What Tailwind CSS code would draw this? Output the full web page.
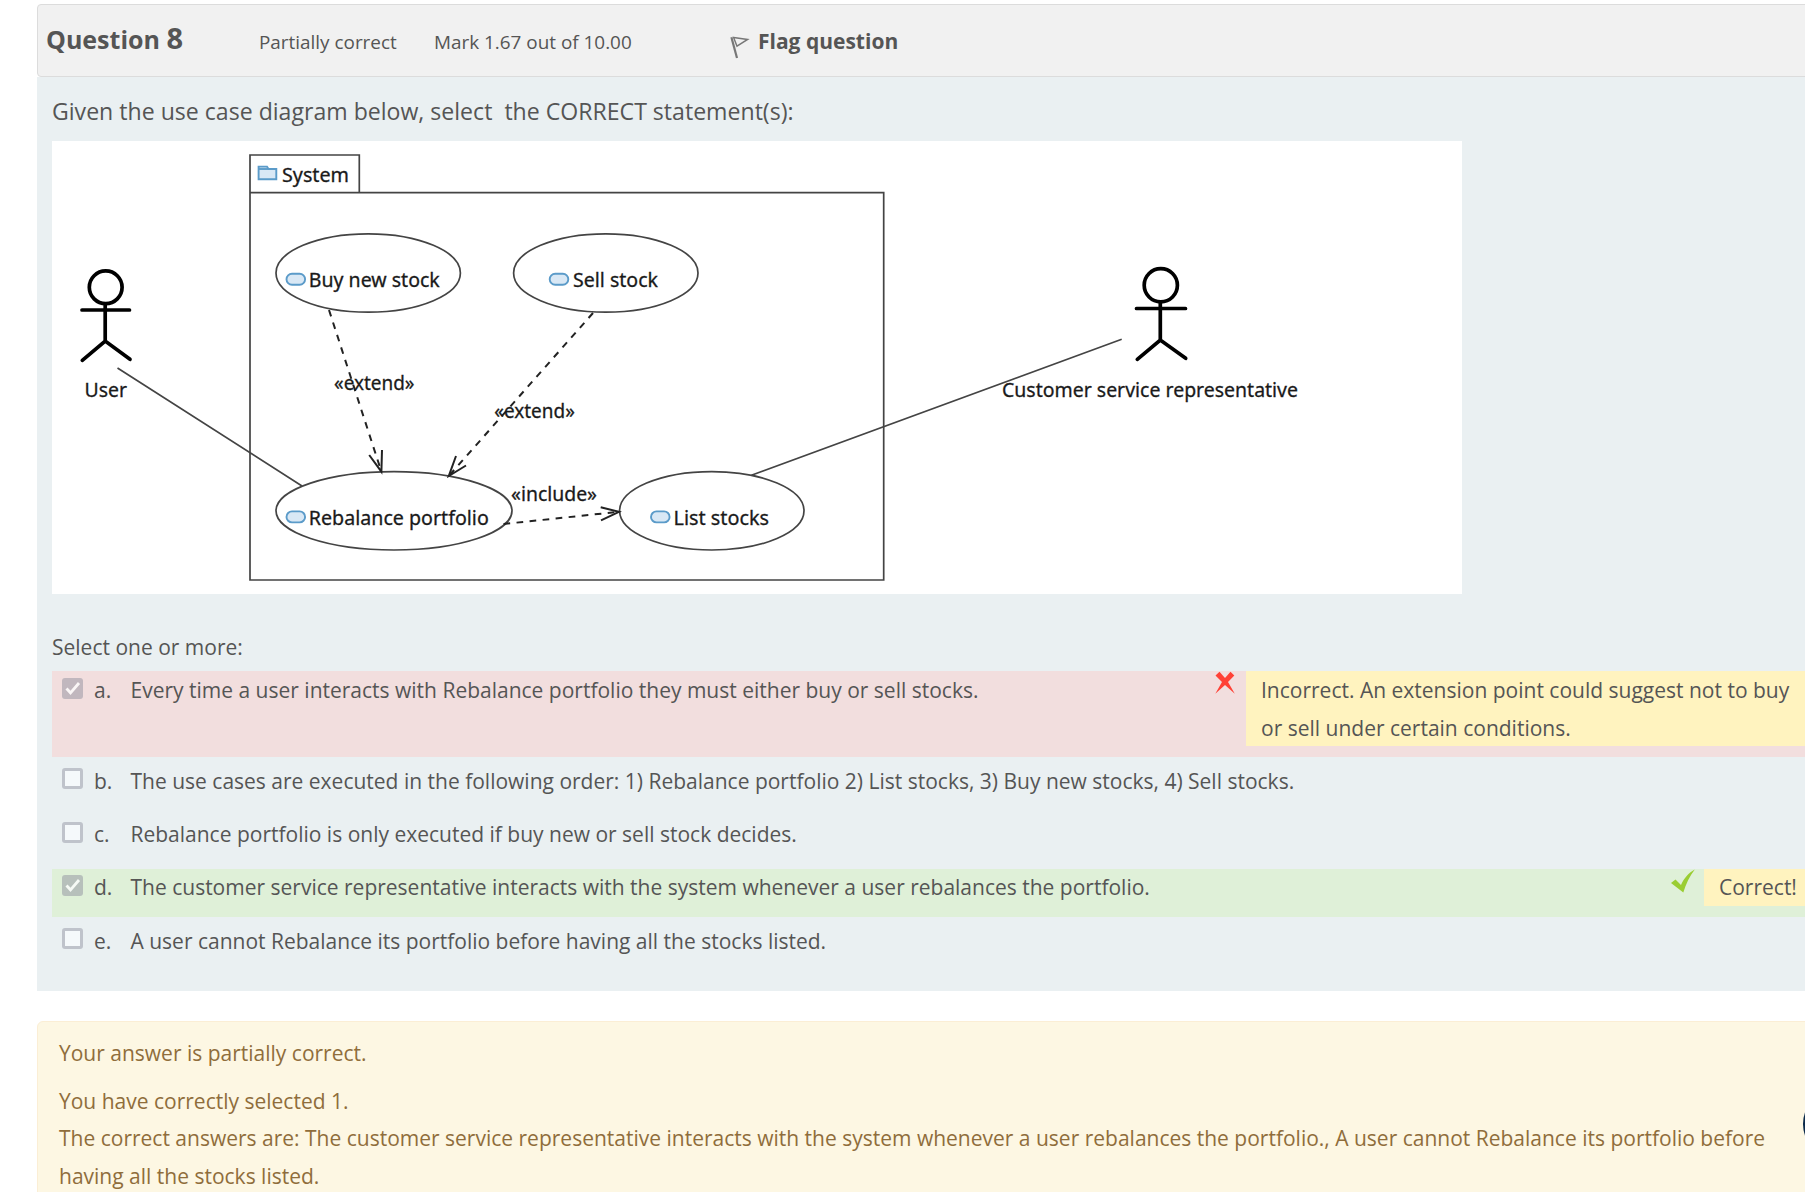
<!DOCTYPE html>
<html lang="en">
<head>
<meta charset="utf-8">
<title>Question 8</title>
<script src="https://cdn.jsdelivr.net/npm/@tailwindcss/browser@4"></script>
</head>
<body class="bg-white overflow-hidden font-['Open_Sans',sans-serif] text-[#555]">
<div class="relative w-[1805px] h-[1192px] overflow-hidden pl-[37px] pt-1">
  <main class="w-[1800px]">
    <header class="flex h-[73px] items-baseline rounded border border-[#dcdcdc] bg-[#f1f1f1] pl-2 pt-[13px] whitespace-nowrap">
      <h3 class="w-[213px] text-[25px] font-bold leading-[40px]">Question <span class="text-[29px]">8</span></h3>
      <div class="w-[175px] text-[18.9px]">Partially correct</div>
      <div class="w-[296px] text-[18.9px]">Mark 1.67 out of 10.00</div>
      <svg class="mr-[8px] w-5 h-[23px] self-start mt-[18px]" viewBox="0 0 20 23" fill="none" stroke="#777" stroke-width="1.5"><path d="M1.4 1.2L7 22" stroke-width="2.2"/><path d="M3.6 1.4L17.6 3.4L7 10.2Z"/></svg>
      <a class="text-[21px] font-bold">Flag question</a>
    </header>

    <section class="h-[914px] bg-[#eaf0f2] pl-[15px]">
      <p class="h-16 pt-[14px] text-[23.1px] leading-[40px] whitespace-pre">Given the use case diagram below, select&nbsp; the CORRECT statement(s):</p>

      <!-- Use case diagram -->
      <svg class="block h-[453px] w-[1410px] bg-white" viewBox="52 141 1410 453" fill="none" stroke="#444" stroke-width="1.7" font-family="Noto Sans, sans-serif" font-size="20">
        <path d="M250 192.7V155H359.3V192.7M250 192.7H883.7V580H250Z"/>
        <ellipse cx="368.2" cy="273" rx="92.2" ry="39.2"/>
        <ellipse cx="605.8" cy="273" rx="92.2" ry="39.2"/>
        <ellipse cx="394" cy="510.8" rx="118" ry="39.2"/>
        <ellipse cx="711.8" cy="510.8" rx="92.2" ry="39.2"/>
        <path d="M117.5 368L302 486M1121.7 339.3L751.4 475.3"/>
        <g stroke="#222" stroke-width="2">
          <path stroke-dasharray="6.7 6.4" d="M329 310L381.4 471.7M593 313L448.8 476M503.5 524L619 511.8"/>
          <path d="M369.2 455L381.4 471.7L382 450M456 456L448.8 476L466 465.5M600.7 507.3L619 511.8L601 520.3"/>
        </g>
        <g stroke="#000" stroke-width="3.7" stroke-linecap="round">
          <circle cx="105.7" cy="287.3" r="16.4"/>
          <path d="M105.2 304V341M82 310H129.5M82.3 360.3L105.2 341L130 359.3"/>
          <circle cx="1160.8" cy="285.3" r="16.6"/>
          <path d="M1160.3 302V340M1136.5 308.5H1185.5M1137.3 359.3L1160.3 340L1185.7 358.3"/>
        </g>
        <g stroke="#5b9bc9" stroke-width="1.9" fill="#d9e8f5">
          <path d="M258.6 179.2V166.6H267L268.5 169H276.3V179.2Z"/>
          <path d="M258.6 169H268"/>
          <rect x="286.5" y="273.8" width="18.6" height="11" rx="5.5"/>
          <rect x="549.7" y="273.8" width="18.6" height="11" rx="5.5"/>
          <rect x="286.5" y="511.4" width="18.6" height="11" rx="5.5"/>
          <rect x="651" y="511.4" width="18.6" height="11" rx="5.5"/>
        </g>
        <g fill="#1a1a1a" stroke="#1a1a1a" stroke-width=".3">
          <text x="282" y="181.7" textLength="67" lengthAdjust="spacingAndGlyphs">System</text>
          <text x="308.8" y="287.3" textLength="131" lengthAdjust="spacingAndGlyphs">Buy new stock</text>
          <text x="573" y="287.3" textLength="85" lengthAdjust="spacingAndGlyphs">Sell stock</text>
          <text x="308.8" y="525" textLength="180" lengthAdjust="spacingAndGlyphs">Rebalance portfolio</text>
          <text x="673.5" y="525" textLength="95.5" lengthAdjust="spacingAndGlyphs">List stocks</text>
          <text x="84.5" y="397.3" textLength="42.5" lengthAdjust="spacingAndGlyphs">User</text>
          <text x="1002" y="397.3" textLength="296" lengthAdjust="spacingAndGlyphs">Customer service representative</text>
          <text x="334" y="390.3" textLength="80.5" lengthAdjust="spacingAndGlyphs">«extend»</text>
          <text x="494.3" y="418" textLength="80.5" lengthAdjust="spacingAndGlyphs">«extend»</text>
          <text x="511" y="501" textLength="86" lengthAdjust="spacingAndGlyphs">«include»</text>
        </g>
      </svg>

      <div class="h-[77px] pt-[34px] text-[21px] leading-[38px]">Select one or more:</div>

      <div class="flex flex-col gap-[5px] text-[21px] leading-[38px] whitespace-nowrap">
        <div class="flex h-[86px] bg-[#f2dede]">
          <span class="mt-[7px] ml-[10px] mr-[11px] h-[21px] w-[21px] rounded-[3px] bg-[#c1b7be]"><svg viewBox="0 0 21 21" fill="none" stroke="#faf6f6" stroke-width="2.8" class="block"><path d="M4.5 10.5L8.5 14.8L17 5"/></svg></span>
          <span class="w-[36.5px]">a.</span><span>Every time a user interacts with Rebalance portfolio they must either buy or sell stocks.</span>
          <svg class="ml-auto h-[23px] w-5" viewBox="0 0 20 23" fill="#ff4136"><path d="M.5 4.5L4.5 .8L10 7L15.5 .8L19.3 4.5L13 11L19.8 22.7L10 14L.3 22.7L7 11Z"/></svg>
          <span class="ml-[11px] h-[75px] w-[591px] bg-[#fff3bf] pl-[15px]">Incorrect. An extension point could suggest not to buy<br>or sell under certain conditions.</span>
        </div>
        <div class="flex h-[48.5px]">
          <span class="mt-[6px] ml-[10px] mr-[11px] h-[21px] w-[21px] rounded-[3px] border-[3px] border-[#bfc3cb] bg-[#f5f9fb]"></span>
          <span class="w-[36.5px]">b.</span><span>The use cases are executed in the following order: 1) Rebalance portfolio 2) List stocks, 3) Buy new stocks, 4) Sell stocks.</span>
        </div>
        <div class="flex h-[48.5px] leading-[37px]">
          <span class="mt-[6px] ml-[10px] mr-[11px] h-[21px] w-[21px] rounded-[3px] border-[3px] border-[#bfc3cb] bg-[#f5f9fb]"></span>
          <span class="w-[36.5px]">c.</span><span>Rebalance portfolio is only executed if buy new or sell stock decides.</span>
        </div>
        <div class="flex h-12 bg-[#dff0d8] leading-[37px]">
          <span class="mt-[6px] ml-[10px] mr-[11px] h-[21px] w-[21px] rounded-[3px] bg-[#b7c0bb]"><svg viewBox="0 0 21 21" fill="none" stroke="#f6faf5" stroke-width="2.8" class="block"><path d="M4.5 10.5L8.5 14.8L17 5"/></svg></span>
          <span class="w-[36.5px]">d.</span><span>The customer service representative interacts with the system whenever a user rebalances the portfolio.</span>
          <svg class="ml-auto h-6 w-6" viewBox="0 0 24 24" fill="#9acd32"><path d="M0 14L4.5 10.5L10 16C13 9.5 17 4 23.8 .5C18.5 7 15 15 12.3 23.5Z"/></svg>
          <span class="ml-[9px] h-[37px] w-[133px] bg-[#fff3bf] pl-[15px]">Correct!</span>
        </div>
        <div class="flex h-[48.5px]">
          <span class="mt-[6px] ml-[10px] mr-[11px] h-[21px] w-[21px] rounded-[3px] border-[3px] border-[#bfc3cb] bg-[#f5f9fb]"></span>
          <span class="w-[36.5px]">e.</span><span>A user cannot Rebalance its portfolio before having all the stocks listed.</span>
        </div>
      </div>
    </section>

    <section class="mt-[30px] h-[190px] rounded-md border border-[#fbeed5] bg-[#fdf7e3] pl-[21px] pt-[13px] text-[21px] leading-[37.5px] text-[#8f6d3b] whitespace-nowrap">
      <p class="mb-[10px]">Your answer is partially correct.</p>
      <p>You have correctly selected 1.</p>
      <p>The correct answers are: The customer service representative interacts with the system whenever a user rebalances the portfolio., A user cannot Rebalance its portfolio before<br>having all the stocks listed.</p>
    </section>
  </main>
  <div class="absolute left-[1803px] top-[1088px] h-[72px] w-[72px] rounded-full bg-[#0b2a4a]"></div>
</div>
</body>
</html>
